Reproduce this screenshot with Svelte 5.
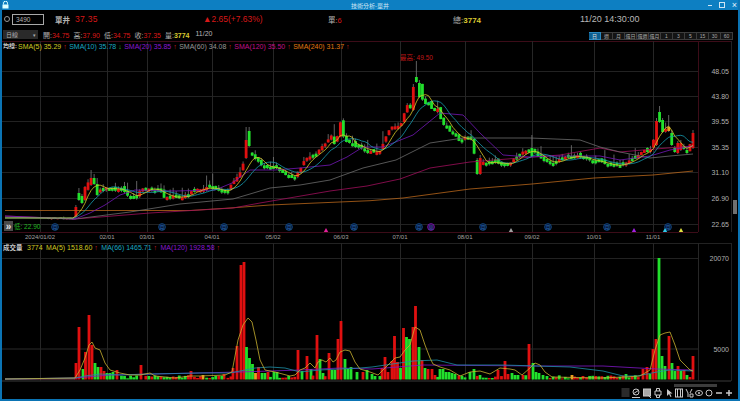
<script>
  const gridX = [40, 107, 147, 212, 273, 341, 400, 465, 532, 594, 653];
  const dates = ['2024/01/02', '02/01', '03/01', '04/01', '05/02', '06/03', '07/01', '08/01', '09/02', '10/01', '11/01'];
  const priceTicks = [[71, '48.05'], [96, '43.80'], [121, '39.55'], [147, '35.35'], [172, '31.10'], [198, '26.90'], [224, '22.65']];
  const frames = ['日', '週', '月', '還日', '還週', '還月', '1', '3', '5', '15', '30', '60'];

  let seed = 77;
  function rnd() {
    seed = (seed * 16807) % 2147483647;
    return seed / 2147483647;
  }

  function interp(keys, x) {
    if (x <= keys[0][0]) return keys[0][1];
    for (let i = 1; i < keys.length; i++) {
      if (x <= keys[i][0]) {
        const [x0, y0] = keys[i - 1];
        const [x1, y1] = keys[i];
        return y0 + ((y1 - y0) * (x - x0)) / (x1 - x0);
      }
    }
    return keys[keys.length - 1][1];
  }

  const closeKeys = [
    [46, 218], [74, 218], [76, 207], [80, 199], [83, 198], [86, 187], [90, 178], [93, 182], [98, 192], [105, 188],
    [115, 190], [120, 188], [125, 193], [130, 196], [135, 197], [140, 190], [150, 188], [160, 192], [165, 198],
    [172, 196], [180, 199], [190, 193], [195, 190], [210, 187], [215, 190], [222, 193], [228, 190], [233, 183],
    [240, 172], [245, 160], [250, 152], [255, 158], [262, 167], [275, 168], [285, 174], [295, 177], [300, 170],
    [305, 157], [315, 155], [325, 143], [331, 135], [335, 145], [338, 133], [341, 120], [344, 140], [350, 144],
    [355, 146], [362, 148], [370, 151], [380, 152], [385, 138], [392, 126], [400, 125], [407, 106], [411, 110],
    [415, 88], [418, 80], [421, 96], [425, 104], [430, 104], [433, 114], [437, 106], [440, 117], [443, 124],
    [450, 131], [456, 137], [460, 144], [465, 138], [472, 140], [476, 164], [480, 161], [486, 164], [495, 161],
    [500, 166], [510, 162], [518, 156], [525, 151], [532, 150], [540, 158], [552, 164], [565, 157], [578, 156],
    [590, 160], [600, 162], [612, 165], [622, 166], [628, 161], [635, 158], [643, 151], [649, 151], [653, 143]
  ];

  // hand placed candles where the chart has its biggest moves
  const placed = [
    [76, 207, 217, 'r', 205], [80, 193, 200, 'g', 188], [83, 196, 203, 'g', 194], [86, 187, 200, 'r', 186],
    [90, 178, 185, 'r', 170], [94, 178, 184, 'g', 174], [98, 184, 195, 'g', 178],
    [247, 140, 158, 'r', 127], [250, 131, 146, 'g', 127],
    [412, 87, 110, 'r', 84], [415.5, 77, 82, 'g', 61], [418.5, 83, 97, 'g', 80],
    [477, 160, 174, 'g', 158], [480, 158, 174, 'r', 155],
    [532, 148, 156, 'g', 135],
    [656, 121, 145, 'r', 118], [659, 112, 122, 'g', 106], [662, 120, 132, 'g', 118], [668, 127, 131, 'o', 115],
    [672, 133, 145, 'g', 130], [675, 148, 152, 'g', 146], [678, 143, 153, 'r', 141], [681, 143, 150, 'r', 140],
    [687, 150, 153, 'g', 147], [693, 133, 148, 'r', 130]
  ];
  const colorOf = { r: '#e01010', g: '#22e02c', o: '#e8a020' };

  const barXs = [];
  for (let x = 693; x > 46; x -= 3.04) barXs.unshift(x);

  const closes = barXs.map((x) => {
    if (x > 653) return interp([[653, 143], [656, 122], [659, 118], [662, 130], [668, 128], [672, 143], [675, 150], [678, 145], [681, 146], [687, 152], [693, 136]], x);
    return interp(closeKeys, x) + (x > 100 ? (rnd() - 0.5) * 2.5 : 0);
  });

  const candles = barXs.map((x, i) => {
    const spot = placed.find((c) => Math.abs(c[0] - x) < 1.6);
    if (spot) {
      return { x, top: spot[1], bot: spot[2], wick: spot[4], low: spot[2] + 1, color: colorOf[spot[3]] };
    }
    const close = closes[i];
    const flat = x < 74;
    // slight bias towards down days, the quiet stretches are mostly green
    const open = (i ? closes[i - 1] : close) + (rnd() - 0.72) * (flat ? 0.5 : 4);
    const top = Math.min(open, close);
    const bot = Math.max(Math.max(open, close), top + (flat ? 1.2 : 3));
    return {
      x,
      top,
      bot,
      wick: top - rnd() * rnd() * rnd() * (flat ? 4 : 22),
      low: bot + rnd() * (flat ? 0.5 : 1.5),
      color: close < open ? '#e01010' : flat ? '#8a8a8a' : '#22e02c'
    };
  });

  function average(n) {
    const pts = [[5, 218], [barXs[0], 218]];
    closes.forEach((_, i) => {
      const from = Math.max(0, i - n + 1);
      const part = closes.slice(from, i + 1);
      pts.push([barXs[i], part.reduce((a, b) => a + b, 0) / part.length]);
    });
    return pts;
  }

  const toLine = (pts) => pts.map(([x, y]) => `${x.toFixed(1)},${y.toFixed(1)}`).join(' ');

  const priceLines = [
    { color: '#b8661a', pts: [[5, 210.5], [190, 210.5], [230, 208], [270, 205], [370, 200.7], [403, 198], [470, 189], [532, 184], [594, 178], [653, 175], [693, 171]] },
    { color: '#a00f5c', pts: [[5, 216], [75, 219], [150, 213], [233, 208], [260, 203], [330, 191], [367, 186], [400, 179], [430, 168], [470, 162], [520, 158], [560, 155], [600, 148], [620, 152], [643, 150], [693, 146]] },
    { color: '#6c6c6c', pts: [[5, 217], [75, 219], [130, 212], [180, 204], [233, 199], [250, 194], [270, 188], [300, 185], [330, 180], [363, 168], [396, 160], [430, 143], [463, 138], [513, 138], [530, 138], [580, 140], [600, 147], [620, 152], [650, 158], [670, 156], [693, 154]] },
    { color: '#7418b8', pts: [[5, 216], [75, 219], [90, 213], [105, 205], [120, 195], [135, 190], [175, 191], [215, 190], [232, 183], [250, 170], [275, 170], [300, 168], [330, 165], [347, 157], [363, 147], [383, 147], [413, 135], [440, 113], [463, 115], [480, 133], [503, 155], [530, 157], [550, 156], [600, 156], [620, 160], [650, 156], [670, 150], [693, 146]] },
    { color: '#169cb0', pts: average(10) },
    { color: '#d8c828', pts: average(5) }
  ];

  const marks = [55, 162, 224, 289, 354, 419, 483, 548, 607, 668];
  const tris = [[326, '#e0209a'], [511, '#a0a0a0'], [634, '#a020e0'], [665, '#30c8e8'], [681, '#e0e040']];

  const volSpikes = [
    [76, 363, 'r'], [79, 327, 'r'], [83, 369, 'g'], [85.5, 352, 'r'], [89, 315, 'r'], [92, 345, 'r'], [95, 363, 'g'], [98, 367, 'g'],
    [101, 367, 'r'], [104, 371, 'r'], [107, 373, 'g'], [110, 373, 'g'], [113, 372, 'g'], [117, 370, 'r'], [141, 365, 'r'],
    [191, 371, 'r'], [203, 375, 'o'], [224, 374, 'r'], [233, 368, 'r'], [237, 346, 'r'], [241, 265, 'r'], [244, 262, 'r'],
    [246.5, 347, 'g'], [249.5, 358, 'g'], [252.5, 364, 'g'], [255.5, 373, 'o'], [258.5, 367, 'r'], [262, 373, 'g'], [265, 373, 'g'],
    [268, 372, 'r'], [274, 372, 'g'], [277, 372, 'g'], [298, 350, 'r'], [302, 371, 'g'], [307, 356, 'r'], [311, 369, 'g'],
    [317, 335, 'r'], [320, 359, 'g'], [323, 373, 'g'], [329, 353, 'r'], [332, 370, 'g'], [335, 370, 'g'], [338, 339, 'r'],
    [341, 321, 'r'], [345, 359, 'g'], [348, 369, 'g'], [351, 367, 'g'], [357, 372, 'g'], [363, 372, 'r'], [367, 370, 'g'],
    [372, 374, 'g'], [375, 376, 'g'], [382, 368, 'r'], [385, 357, 'r'], [388, 372, 'r'], [392, 361, 'r'], [394.5, 336, 'r'],
    [397.5, 362, 'r'], [400.5, 368, 'g'], [403.5, 328, 'r'], [406.5, 337, 'g'], [409.5, 339, 'g'], [413, 327, 'r'], [415.5, 306, 'r'],
    [419, 347, 'g'], [422, 360, 'r'], [425, 368, 'g'], [428, 369, 'r'], [432, 369, 'r'], [435, 375, 'r'], [440, 369, 'g'], [443, 369, 'g'],
    [446, 372, 'g'], [449, 372, 'g'], [452, 373, 'g'], [455, 374, 'g'], [470, 372, 'g'], [474, 369, 'g'], [480, 375, 'g'],
    [498, 370, 'r'], [505, 361, 'r'], [508, 374, 'r'], [512, 373, 'g'], [515, 375, 'g'], [518, 375, 'g'], [523, 375, 'r'], [529, 344, 'r'],
    [533, 363, 'g'], [536, 372, 'g'], [539, 373, 'g'], [543, 375, 'g'], [547, 376, 'g'], [572, 375, 'o'], [583, 376, 'r'], [626, 374, 'g'],
    [643, 369, 'r'], [647, 367, 'r'], [650, 374, 'g'], [653, 349, 'r'], [656, 339, 'r'], [659, 258, 'g'], [662, 356, 'g'], [665, 366, 'g'],
    [669, 336, 'r'], [672, 363, 'g'], [675, 371, 'g'], [678, 366, 'r'], [681, 371, 'g'], [684, 370, 'r'], [687, 375, 'g'], [690, 377, 'r'], [693, 356, 'r']
  ];
  const volBars = volSpikes.map(([x, top, c]) => ({ x, top, color: colorOf[c] }));
  for (const x of barXs) {
    if (x > 74 && !volSpikes.some((s) => Math.abs(s[0] - x) < 2)) {
      volBars.push({ x, top: 378.4 - rnd() * 3.2, color: rnd() > 0.5 ? '#e01010' : '#22e02c' });
    }
  }

  const volLines = [
    { color: '#8018c8', pts: [[5, 379], [75, 378], [110, 375], [240, 372], [300, 370], [340, 368], [372, 369], [423, 365], [537, 366], [603, 366], [657, 369], [693, 370]] },
    { color: '#1c90a8', pts: [[5, 379], [75, 378], [85, 376], [100, 374], [120, 375], [150, 374], [200, 373], [230, 373], [245, 370], [255, 368], [270, 367], [285, 368], [300, 372], [320, 370], [360, 368], [372, 367], [413, 361], [437, 360], [457, 365], [503, 365], [570, 367], [603, 371], [623, 376], [637, 376], [657, 372], [670, 370], [693, 371]] },
    { color: '#c8b030', pts: [[5, 379], [75, 378], [80, 370], [85, 358], [89, 345], [92, 342], [95, 348], [100, 350], [105, 363], [110, 370], [120, 373], [130, 375], [140, 375], [150, 373], [155, 376], [175, 378], [190, 376], [200, 376], [225, 375], [232, 372], [238, 340], [243, 325], [248, 318], [252, 322], [256, 340], [260, 360], [265, 370], [275, 372], [290, 376], [295, 375], [300, 370], [305, 368], [310, 363], [315, 368], [318, 362], [322, 360], [326, 362], [330, 358], [333, 362], [336, 360], [340, 352], [345, 350], [350, 351], [355, 362], [360, 369], [370, 372], [378, 375], [385, 368], [395, 358], [400, 357], [405, 350], [410, 345], [415, 327], [420, 330], [425, 345], [430, 358], [433, 364], [440, 367], [450, 370], [460, 376], [470, 372], [480, 371], [490, 374], [500, 368], [510, 369], [515, 370], [522, 375], [530, 368], [535, 363], [540, 365], [545, 372], [552, 377], [600, 378], [625, 377], [640, 376], [650, 370], [655, 350], [660, 335], [665, 333], [670, 332], [675, 345], [680, 360], [685, 365], [690, 370], [693, 371]] }
  ];
</script>

<div class="window">
  <header class="titlebar">
    <svg class="lock" width="7" height="8" viewBox="0 0 7 8"><path d="M1.5 3.5V2.2a2 2 0 0 1 4 0v1.3" fill="none" stroke="#dff" stroke-width="1" /><rect x="0.5" y="3.5" width="6" height="4" fill="#dff" /></svg>
    <span class="title">技術分析-單井</span>
    <div class="winbtns">
      <span class="min"></span>
      <span class="restore"></span>
      <span class="close">×</span>
    </div>
  </header>

  <div class="quote">
    <span class="radio"></span>
    <span class="code">3490</span>
    <span class="name">單井</span>
    <span class="price red">37.35</span>
    <span class="change red">▲2.65(+7.63%)</span>
    <span class="single">單:<b class="red">6</b></span>
    <span class="total">總:<b class="yellow">3774</b></span>
    <span class="time">11/20 14:30:00</span>
  </div>

  <div class="ohlc">
    <span class="select">日線<i>▾</i></span>
    <span class="vals">
      <span>開:<b class="red">34.75</b></span>
      <span>高:<b class="red">37.90</b></span>
      <span>低:<b class="red">34.75</b></span>
      <span>收:<b class="red">37.35</b></span>
      <span>量:<b class="yellow">3774</b></span>
      <span class="day">11/20</span>
    </span>
    <div class="frames">
      {#each frames as f, i}
        <span class:on={i === 0}>{f}</span>
      {/each}
    </div>
  </div>

  <section class="panel price-panel">
    <div class="legend">
      <span class="lead">均線:</span><span class="c-yellow">SMA(5) 35.29 <em class="up">↑</em></span>
      <span class="c-cyan">SMA(10) 35.78 <em class="down">↓</em></span>
      <span class="c-purple">SMA(20) 35.85 <em class="up">↑</em></span>
      <span class="c-gray">SMA(60) 34.08 <em class="up">↑</em></span>
      <span class="c-pink">SMA(120) 35.50 <em class="up">↑</em></span>
      <span class="c-orange">SMA(240) 31.37 <em class="up">↑</em></span>
    </div>
    <svg width="736" height="202" viewBox="2 41 736 202">
      <line x1="2" y1="41.5" x2="731" y2="41.5" stroke="#3c0c18" />
      {#each priceTicks as t}
        <line x1="2" x2="698" y1={t[0] + 0.5} y2={t[0] + 0.5} stroke="#222" />
        <text class="axis" x="729" y={t[0] + 3} text-anchor="end">{t[1]}</text>
      {/each}
      {#each gridX as x, i}
        <line x1={x + 0.5} x2={x + 0.5} y1="41" y2="232" stroke="#262626" />
        <text class="date" {x} y="239" text-anchor="middle">{dates[i]}</text>
      {/each}
      <line x1="698.5" x2="698.5" y1="41" y2="232" stroke="#3c0c18" />
      <line x1="731.5" x2="731.5" y1="41" y2="232" stroke="#222" />
      <line x1="2" x2="698" y1="232.5" y2="232.5" stroke="#3c0c18" />

      {#each candles as c}
        <line x1={c.x} x2={c.x} y1={c.wick} y2={c.low} stroke="#7a7a7a" stroke-width="0.8" />
        <rect x={c.x - 1.4} y={c.top} width="2.8" height={c.bot - c.top} fill={c.color} />
      {/each}
      {#each priceLines as l}
        <polyline points={toLine(l.pts)} fill="none" stroke={l.color} stroke-width="0.8" />
      {/each}

      <text class="high" x="400" y="59.5">最高: 49.50</text>

      {#each marks as x}
        <circle cx={x} cy="227" r="3.4" fill="#06183a" stroke="#15508c" stroke-width="0.8" />
        <text class="mark" {x} y="229" text-anchor="middle">月</text>
      {/each}
      <circle cx="431" cy="227" r="3.4" fill="#300848" stroke="#8018b8" stroke-width="0.8" />
      <text class="mark" x="431" y="229" text-anchor="middle">息</text>
      {#each tris as t}
        <polygon points={`${t[0] - 2.2},232 ${t[0] + 2.2},232 ${t[0]},228`} fill={t[1]} />
      {/each}

      <rect x="4" y="221" width="9" height="10" fill="#4a4a4a" />
      <text class="chev" x="8.5" y="229.5" text-anchor="middle">»</text>
      <text class="low" x="14" y="228.500">低: 22.90</text>
      <rect x="733" y="200" width="4" height="14" fill="#707070" />
    </svg>
  </section>

  <section class="panel vol-panel">
    <div class="legend">
      <span class="lead">成交量</span><span class="c-yellow first">3774</span>
      <span class="c-yellow">MA(5) 1518.60 <em class="up">↑</em></span>
      <span class="c-cyan">MA(66) 1465.71 <em class="up">↑</em></span>
      <span class="c-purple">MA(120) 1928.58 <em class="up">↑</em></span>
    </div>
    <svg width="736" height="141" viewBox="2 243 736 141">
      <line x1="2" y1="243.5" x2="731" y2="243.5" stroke="#222" />
      <line x1="2" x2="698" y1="258.5" y2="258.5" stroke="#222" />
      <line x1="2" x2="698" y1="349" y2="349" stroke="#2a2a2a" />
      <line x1="2" x2="731" y1="381" y2="381" stroke="#3a3a3a" />
      {#each gridX as x}
        <line x1={x + 0.5} x2={x + 0.5} y1="243" y2="381" stroke="#262626" />
      {/each}
      <line x1="698.5" x2="698.5" y1="243" y2="381" stroke="#262626" />
      <line x1="731.5" x2="731.5" y1="243" y2="381" stroke="#222" />
      <text class="axis" x="729" y="261" text-anchor="end">20070</text>
      <text class="axis" x="729" y="352" text-anchor="end">5000</text>
      {#each volBars as b}
        <rect x={b.x - 1.4} y={b.top} width="2.8" height={379.5 - b.top} fill={b.color} />
      {/each}
      <line x1="5" x2="75" y1="379" y2="379" stroke="#8a5060" />
      {#each volLines as l}
        <polyline points={toLine(l.pts)} fill="none" stroke={l.color} stroke-width="0.8" />
      {/each}
    </svg>
  </section>

  <footer class="tools">
    <div class="scroll"></div>
    <svg width="112" height="12" viewBox="0 0 112 12">
      <rect x="0.5" y="1" width="8" height="9" fill="#2a2a2a" />
      <g fill="none" stroke="#c8c8c8" stroke-width="1">
        <circle cx="15" cy="5" r="3" /><path d="M11 10.5h8M12 7l6-4" />
        <rect x="22.5" y="2" width="7" height="7" fill="#a8a8a8" /><path d="M27 8l3 3" />
        <path d="M34 4h6v4h-6zM35.500 4V1.500h3V4M35.500 8v2.500h3V8" />
        <rect x="54.500" y="2" width="7" height="8" /><path d="M56.500 2v8M59.500 2v8" />
        <path d="M65 2l2 4v4M71 2l-2 4M69 7h3v3h-3z" />
        <ellipse cx="78" cy="6" rx="3.500" ry="2.500" />
        <circle cx="88" cy="6" r="3" />
        <path d="M95 6h6M105 6h6M108 3v6" stroke-width="1.500" />
      </g>
      <path d="M46 2v7l2-2 1.500 3 1-.5L49 6.500h2.500z" fill="#c8c8c8" />
      <circle cx="78" cy="6" r="1" fill="#c8c8c8" />
    </svg>
  </footer>
</div>

<style>
  :global(body) {
    margin: 0;
    background: #000;
  }
  .window {
    box-sizing: border-box;
    width: 740px;
    height: 401px;
    overflow: hidden;
    display: flex;
    flex-direction: column;
    border: 2px solid #0b74b4;
    border-top: 0;
    background: #000;
    color: #b0b0b0;
    font-family: "Liberation Sans", "Noto Sans CJK TC", sans-serif;
    font-size: 8px;
  }
  .titlebar {
    flex: 0 0 10px;
    display: flex;
    align-items: center;
    justify-content: center;
    position: relative;
    margin: 0 -2px;
    background: #0d7fc2;
    color: #cfe6f4;
    font-size: 6px;
  }
  .lock {
    position: absolute;
    left: 2px;
    top: 1px;
  }
  .winbtns {
    position: absolute;
    right: 3px;
    top: 0;
    height: 10px;
    display: flex;
    align-items: center;
    gap: 7px;
  }
  .min {
    width: 4px;
    height: 1px;
    background: #cfe6f4;
  }
  .restore {
    width: 4px;
    height: 4px;
    border: 1px solid #cfe6f4;
  }
  .close {
    font-size: 9px;
    line-height: 10px;
    color: #e6f2fa;
  }
  .quote {
    flex: 0 0 18px;
    display: flex;
    align-items: center;
  }
  .radio {
    box-sizing: border-box;
    width: 6px;
    height: 6px;
    margin-left: 2px;
    border: 1px solid #999;
    border-radius: 50%;
  }
  .code {
    box-sizing: border-box;
    width: 32px;
    height: 11px;
    margin-left: 2px;
    padding-left: 3px;
    border: 1px solid #a8a8a8;
    color: #b0b0b0;
    font-size: 6.5px;
    line-height: 9px;
  }
  .name {
    margin-left: 11px;
    width: 20px;
    font-weight: 700;
    font-size: 7.5px;
  }
  .price {
    width: 128px;
    font-size: 8.5px;
    letter-spacing: 0.3px;
  }
  .change {
    width: 125px;
    font-size: 8.5px;
  }
  .single {
    width: 125px;
    font-size: 7.5px;
  }
  .total {
    width: 127px;
    font-size: 8px;
  }
  .total b {
    font-weight: 700;
  }
  .time {
    font-size: 9px;
    color: #b8b8b8;
  }
  b {
    font-weight: 400;
  }
  .red {
    color: #d81818;
  }
  .yellow {
    color: #d8c830;
  }
  .ohlc {
    flex: 0 0 13px;
    display: flex;
    align-items: center;
    font-size: 7px;
  }
  .select {
    box-sizing: border-box;
    display: flex;
    justify-content: space-between;
    align-items: center;
    width: 35px;
    height: 9px;
    margin-left: 1px;
    padding: 0 2px 0 3px;
    background: #2a2a2a;
    font-size: 6px;
  }
  .select i {
    font-style: normal;
    font-size: 5px;
  }
  .vals {
    display: flex;
    gap: 4px;
    margin-left: 5px;
    margin-top: 1px;
  }
  .vals .day {
    margin-left: 2px;
    color: #b8b8b8;
  }
  .vals span:nth-child(5) b {
    font-weight: 700;
  }
  .frames {
    display: flex;
    margin-left: auto;
    margin-right: 5px;
    margin-top: 3px;
  }
  .frames span {
    box-sizing: border-box;
    width: 12px;
    height: 8px;
    border: 1px solid #3c3c3c;
    border-left-width: 0;
    background: #141414;
    color: #a8a8a8;
    font-size: 5px;
    line-height: 6px;
    text-align: center;
  }
  .frames .on {
    background: #0d5f92;
    border-color: #2a88c0;
    color: #e0e0e0;
  }
  .panel {
    position: relative;
    line-height: 0;
  }
  svg {
    display: block;
  }
  .legend {
    position: absolute;
    left: 1px;
    top: 1px;
    display: flex;
    gap: 2.5px;
    font-size: 7px;
    line-height: 9px;
    white-space: nowrap;
  }
  .legend .lead {
    margin-right: -1.5px;
    font-weight: 700;
    color: #c8c8c8;
    font-size: 6px;
  }
  .vol-panel .legend {
    top: 0;
    gap: 3.5px;
  }
  .vol-panel .lead {
    margin-right: 1px;
    font-size: 6.5px;
  }
  .legend em {
    font-style: normal;
  }
  .up {
    color: #d02020;
  }
  .down {
    color: #20c030;
  }
  .c-yellow {
    color: #d0c820;
  }
  .c-cyan {
    color: #18a8c0;
  }
  .c-purple {
    color: #8818d0;
  }
  .c-gray {
    color: #989898;
  }
  .c-pink {
    color: #c0108a;
  }
  .c-orange {
    color: #e07810;
  }
  .axis {
    fill: #b0b0b0;
    font-size: 7px;
  }
  .date {
    fill: #a0a0a0;
    font-size: 6px;
  }
  .high {
    fill: #c01818;
    font-size: 6.5px;
  }
  .mark {
    fill: #2868b0;
    font-size: 5px;
  }
  .chev {
    fill: #e0e0e0;
    font-size: 10px;
    font-weight: 700;
  }
  .low {
    fill: #20b820;
    font-size: 6.5px;
  }
  .tools {
    flex: 1;
    position: relative;
    display: flex;
    justify-content: flex-end;
    align-items: flex-end;
    padding-right: 5px;
  }
  .scroll {
    position: absolute;
    left: 672px;
    top: 0;
    width: 43px;
    height: 3px;
    background: #3c3c3c;
  }
</style>
